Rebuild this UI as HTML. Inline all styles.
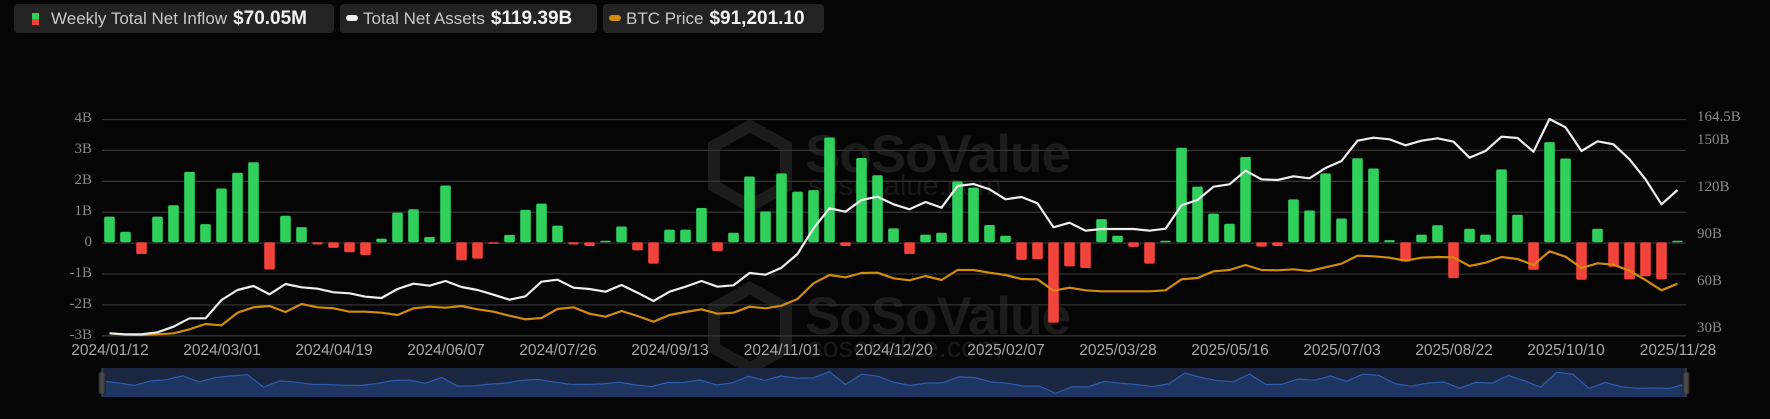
<!DOCTYPE html>
<html><head><meta charset="utf-8"><style>
html,body{margin:0;padding:0;background:#050505;width:1770px;height:419px;overflow:hidden;font-family:"Liberation Sans",sans-serif;}
.pill{position:absolute;top:4px;height:29px;background:#232323;border-radius:4px;color:#c8c8c8;font-size:17px;line-height:29px;white-space:nowrap;}
.pill b{color:#f2f2f2;font-size:19px;margin-left:6px;}
.yl{position:absolute;font-family:"Liberation Serif",serif;font-size:15px;color:#8a8a8a;}
.xl{position:absolute;top:342px;font-size:15.5px;color:#a8a8a8;width:120px;text-align:center;}
.wm{position:absolute;font-weight:bold;color:#1c1c1c;font-size:53px;letter-spacing:-1px;}
.wm2{position:absolute;color:#191919;font-size:29px;}
</style></head><body>
<div class="pill" style="left:14px;width:320px;"><span style="display:inline-block;width:7px;height:12px;margin:0 12px 0 18px;vertical-align:-1px;background:linear-gradient(#2ecf5a 50%,#f0443c 50%);"></span>Weekly Total Net Inflow<b>$70.05M</b></div>
<div class="pill" style="left:340px;width:257px;"><span style="display:inline-block;width:12px;height:6px;border-radius:3px;background:#eee;margin:0 5px 0 6px;vertical-align:3px;"></span>Total Net Assets<b>$119.39B</b></div>
<div class="pill" style="left:603px;width:221px;"><span style="display:inline-block;width:12px;height:6px;border-radius:3px;background:#d18c0c;margin:0 5px 0 6px;vertical-align:3px;"></span>BTC Price<b>$91,201.10</b></div>

<div class="wm" style="left:805px;top:124px;">SoSoValue</div>
<div class="wm2" style="left:808px;top:170px;">sosovalue.com</div>
<div class="wm" style="left:805px;top:286px;">SoSoValue</div>
<div class="wm2" style="left:808px;top:332px;">sosovalue.com</div>
<svg style="position:absolute;left:0;top:0" width="1770" height="419">
<g fill="none" stroke="#1c1c1c" stroke-width="12">
<path d="M750 126 L786 146 L786 186 L750 206 L714 186 L714 146 Z"/>
<path d="M750 288 L786 308 L786 348 L750 368 L714 348 L714 308 Z"/>
</g>
</svg>

<svg id="c" style="position:absolute;left:0;top:0" width="1770" height="419"></svg>

<div class="yl" style="left:60px;top:110px;width:32px;text-align:right">4B</div>
<div class="yl" style="left:60px;top:141px;width:32px;text-align:right">3B</div>
<div class="yl" style="left:60px;top:172px;width:32px;text-align:right">2B</div>
<div class="yl" style="left:60px;top:203px;width:32px;text-align:right">1B</div>
<div class="yl" style="left:60px;top:234px;width:32px;text-align:right">0</div>
<div class="yl" style="left:55px;top:265px;width:37px;text-align:right">-1B</div>
<div class="yl" style="left:55px;top:296px;width:37px;text-align:right">-2B</div>
<div class="yl" style="left:55px;top:327px;width:37px;text-align:right">-3B</div>
<div class="yl" style="left:1697px;top:109px">164.5B</div>
<div class="yl" style="left:1697px;top:132px">150B</div>
<div class="yl" style="left:1697px;top:179px">120B</div>
<div class="yl" style="left:1697px;top:226px">90B</div>
<div class="yl" style="left:1697px;top:273px">60B</div>
<div class="yl" style="left:1697px;top:320px">30B</div>

<div class="xl" style="left:50px">2024/01/12</div>
<div class="xl" style="left:162px">2024/03/01</div>
<div class="xl" style="left:274px">2024/04/19</div>
<div class="xl" style="left:386px">2024/06/07</div>
<div class="xl" style="left:498px">2024/07/26</div>
<div class="xl" style="left:610px">2024/09/13</div>
<div class="xl" style="left:722px">2024/11/01</div>
<div class="xl" style="left:834px">2024/12/20</div>
<div class="xl" style="left:946px">2025/02/07</div>
<div class="xl" style="left:1058px">2025/03/28</div>
<div class="xl" style="left:1170px">2025/05/16</div>
<div class="xl" style="left:1282px">2025/07/03</div>
<div class="xl" style="left:1394px">2025/08/22</div>
<div class="xl" style="left:1506px">2025/10/10</div>
<div class="xl" style="left:1618px">2025/11/28</div>

<script>
var bars=[0.83,0.34,-0.38,0.83,1.2,2.28,0.59,1.74,2.25,2.59,-0.88,0.86,0.49,-0.07,-0.18,-0.32,-0.41,0.12,0.96,1.07,0.17,1.84,-0.58,-0.53,-0.03,0.24,1.05,1.25,0.54,-0.07,-0.12,0.02,0.51,-0.26,-0.69,0.41,0.41,1.11,-0.28,0.31,2.13,1.0,2.23,1.64,1.69,3.39,-0.12,2.73,2.17,0.45,-0.38,0.25,0.31,1.97,1.77,0.56,0.21,-0.57,-0.55,-2.6,-0.78,-0.83,0.75,0.21,-0.15,-0.69,0.02,3.06,1.8,0.93,0.6,2.76,-0.14,-0.12,1.39,1.03,2.23,0.77,2.72,2.39,0.07,-0.62,0.25,0.55,-1.16,0.44,0.25,2.36,0.89,-0.89,3.24,2.71,-1.21,0.44,-0.79,-1.2,-1.1,-1.2,0.05];
var wz=[700,703,703,697,680,655,655,600,570,558,583,552,562,566,577,580,590,594,567,551,557,543,561,570,584,599,589,545,539,563,567,575,555,578,603,575,560,543,560,556,519,524,503,462,385,325,335,300,290,313,328,306,323,258,252,268,298,291,310,382,368,392,387,387,387,392,386,316,300,260,253,212,238,240,229,235,204,183,122,113,118,136,122,115,125,173,153,110,114,155,57,82,153,124,133,178,238,313,270];
var oz=[700,704,705,703,700,688,672,676,638,622,618,636,612,622,625,635,635,638,645,625,620,623,618,628,635,647,658,654,627,622,641,650,633,648,665,645,636,628,641,638,620,625,617,597,550,525,532,519,518,535,541,528,540,510,510,518,525,537,538,572,563,571,574,574,574,574,571,538,534,514,510,495,510,511,508,513,502,491,467,469,473,482,473,471,472,498,488,471,477,495,454,470,504,490,494,512,540,571,551];
var s='';
for(var k=0;k<8;k++){var y=119.5+30.9*k;s+='<line x1="102" x2="1686" y1="'+y+'" y2="'+y+'" stroke="#333" stroke-width="1.3"/>';}
var z=242.3,u=30.9;
for(var i=0;i<bars.length;i++){var x=109.5+16*i-5.3,v=bars[i],h=Math.max(Math.abs(v)*u,1.5);
var y=v>=0?z-h:z;s+='<rect x="'+x+'" y="'+y+'" width="10.6" height="'+h+'" rx="1.5" fill="'+(v>=0?'#2fd05b':'#f3443c')+'"/>';}
function pl(a,c){var p='';for(var i=0;i<a.length;i++)p+=(i?'L':'M')+(109.5+16*i)+' '+(100+a[i]/3).toFixed(1);return '<path d="'+p+'" fill="none" stroke="'+c+'" stroke-width="2.2" stroke-linejoin="round"/>';}
s+=pl(oz,'#d18c0c');s+=pl(wz,'#eeeeee');
// navigator
s+='<rect x="102" y="368" width="1584" height="29" fill="#1b2640"/>';
var nl='';for(var i=0;i<bars.length;i++){var x=102+1584*i/98,y=384-bars[i]*3.6;nl+=(i?'L':'M')+x.toFixed(1)+' '+y.toFixed(1);}
s+='<path d="'+nl+'L1686 397L102 397Z" fill="#1e3461"/>';
s+='<path d="'+nl+'" fill="none" stroke="#2e5cb0" stroke-width="1.2"/>';
s+='<rect x="99" y="372" width="6" height="22" rx="2" fill="#444" stroke="#222"/><rect x="1683" y="372" width="6" height="22" rx="2" fill="#444" stroke="#222"/>';
s+='<line x1="102" x2="102" y1="368" y2="397" stroke="#555"/><line x1="1686" x2="1686" y1="368" y2="397" stroke="#555"/>';
document.getElementById('c').innerHTML=s;
</script>
</body></html>
